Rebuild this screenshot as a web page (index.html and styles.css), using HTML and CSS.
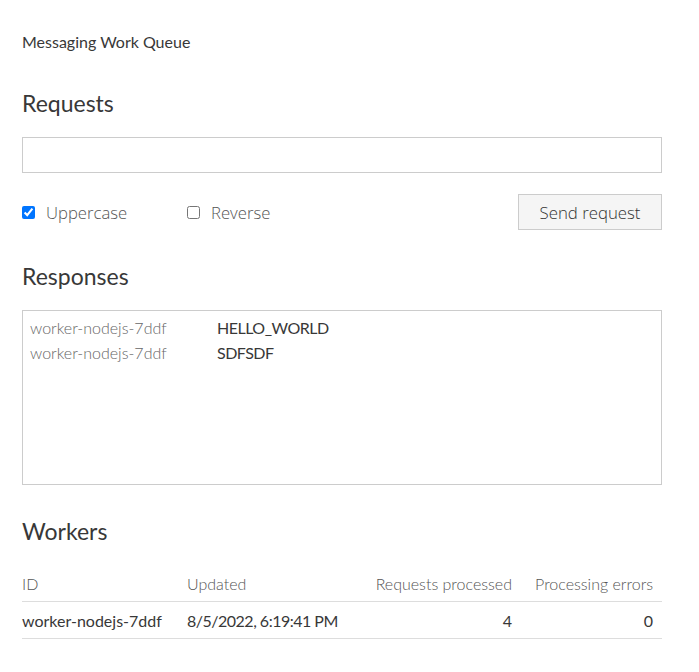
FILE: index.html
```html
<!DOCTYPE html>
<html>
<head>
<meta charset="utf-8">
<link rel="stylesheet" href="styles.css">
</head>
<body>
<main class="page">
  <div class="title">Messaging Work Queue</div>

  <h2 class="heading heading-first">Requests</h2>
  <input class="text-input" type="text">
  <div class="controls">
    <label class="option option-wide"><input type="checkbox" class="check" checked><span class="option-text">Uppercase</span></label>
    <label class="option"><input type="checkbox" class="check"><span class="option-text">Reverse</span></label>
    <button class="send">Send request</button>
  </div>

  <h2 class="heading">Responses</h2>
  <div class="responses">
    <div class="resp-row"><span class="resp-worker">worker-nodejs-7ddf</span><span class="resp-text">HELLO_WORLD</span></div>
    <div class="resp-row"><span class="resp-worker">worker-nodejs-7ddf</span><span class="resp-text">SDFSDF</span></div>
  </div>

  <h2 class="heading">Workers</h2>
  <table class="workers">
    <colgroup>
      <col class="c1"><col class="c2"><col class="c3"><col class="c4">
    </colgroup>
    <thead>
      <tr><th>ID</th><th>Updated</th><th class="num">Requests processed</th><th class="num last">Processing errors</th></tr>
    </thead>
    <tbody>
      <tr><td>worker-nodejs-7ddf</td><td class="date">8/5/2022, 6:19:41 PM</td><td class="num">4</td><td class="num last">0</td></tr>
    </tbody>
  </table>
</main>
</body>
</html>
```
FILE: styles.css
```css
html, body {
  margin: 0;
  padding: 0;
  background: #fff;
}
body {
  font-family: Lato, "Open Sans", sans-serif;
  color: #383838;
}
.page {
  max-width: 640px;
  padding: 30px 22px;
}
.title {
  font-size: 16px;
  line-height: 24px;
}
.heading {
  font-size: 23px;
  line-height: 32px;
  font-weight: 400;
  margin: 30px 0 18px;
}
.heading-first {
  margin-top: 33px;
}
.text-input {
  display: block;
  box-sizing: border-box;
  width: 100%;
  height: 36px;
  margin: 0;
  border: 1px solid #ccc;
  border-radius: 0;
  outline: none;
}
.controls {
  display: flex;
  align-items: center;
  margin-top: 21px;
  height: 36px;
}
.option {
  display: flex;
  align-items: center;
  font-family: "Open Sans", sans-serif;
  font-weight: 300;
  font-size: 16.7px;
  color: #555;
}
.option-wide {
  width: 165px;
}
.check {
  margin: 0;
  width: 13px;
  height: 13px;
}
.option-text {
  margin-left: 11px;
}
.send {
  margin-left: auto;
  width: 144px;
  height: 36px;
  border: 1px solid #ccc;
  background: #f5f5f5;
  font-family: "Open Sans", sans-serif;
  font-weight: 300;
  font-size: 16.8px;
  color: #333;
  border-radius: 0;
  padding: 0;
}
.responses {
  box-sizing: border-box;
  height: 175px;
  border: 1px solid #ccc;
  padding: 4px 7px;
}
.resp-row {
  display: flex;
  font-size: 16px;
  line-height: 25px;
}
.resp-worker {
  width: 187px;
  color: #666;
  font-weight: 300;
}
.resp-text {
  color: #383838;
  letter-spacing: -0.5px;
}
.workers {
  width: 100%;
  border-collapse: collapse;
  table-layout: fixed;
  font-size: 16px;
}
.c1 { width: 165px; }
.c2 { width: 170px; }
.c3 { width: 163px; }
.c4 { width: 142px; }
.workers th, .workers td {
  text-align: left;
  padding: 0 8px 0 0;
  height: 36px;
  border-bottom: 1px solid #ddd;
}
.workers th {
  font-weight: 300;
  color: #555;
}
.workers td {
  color: #383838;
}
.workers td.date {
  letter-spacing: -0.5px;
}
.workers .num {
  text-align: right;
}
.workers .last {
  padding-right: 9px;
}
```
